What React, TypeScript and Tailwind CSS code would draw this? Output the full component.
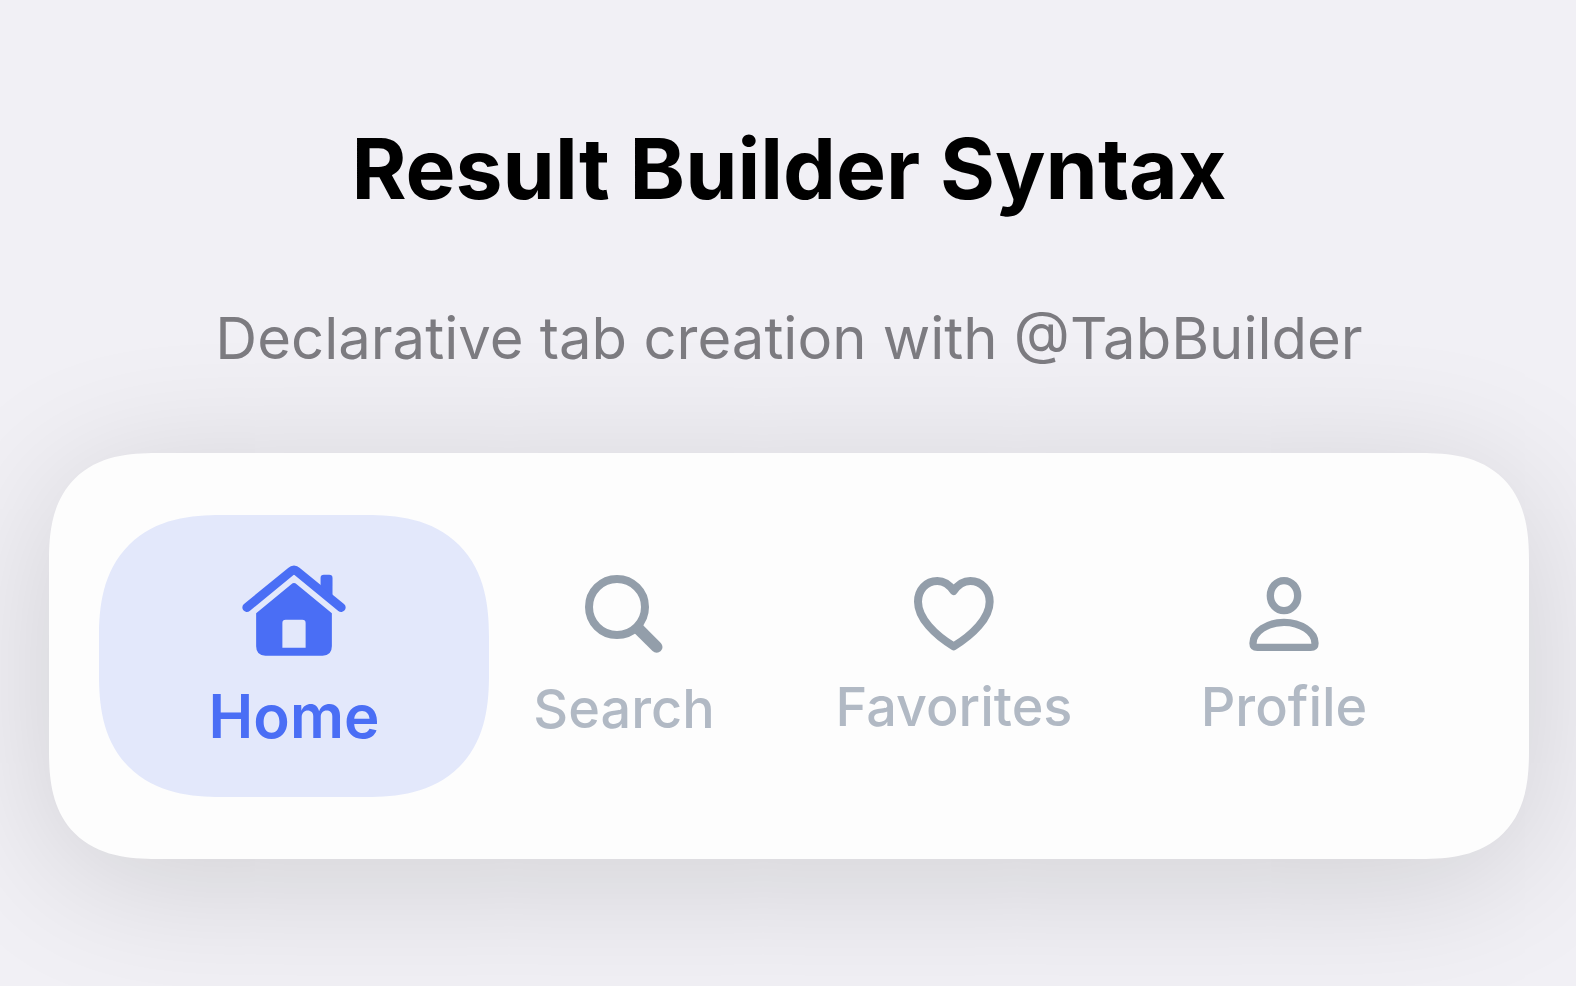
import { useState } from 'react';
import type { ReactElement } from 'react';

function HomeIcon() {
  return (
    <svg aria-hidden="true" viewBox="66 45 312 274" className="h-[91px] w-[104px]">
      <path d="M80 173 212 65Q222 56 232 65L364 173" fill="none" stroke="currentColor" strokeWidth="27" strokeLinecap="round" strokeLinejoin="round" />
      <path d="M302 108V84q0-10 10-10h16q10 0 10 10v56z" fill="currentColor" />
      <path
        fillRule="evenodd"
        fill="currentColor"
        d="M214 103q8-7 16 0l106 87v100q0 28-28 28H136q-28 0-28-28V190zM197 210q-10 0-10 10v74h70v-74q0-10-10-10z"
      />
    </svg>
  );
}

function SearchIcon() {
  return (
    <svg aria-hidden="true" viewBox="48 45 234 234" className="size-[78px]" fill="none" stroke="currentColor">
      <circle cx="144" cy="141" r="84" strokeWidth="24" />
      <path d="M210 208 263 261" strokeWidth="35" strokeLinecap="round" />
    </svg>
  );
}

function HeartIcon() {
  return (
    <svg aria-hidden="true" viewBox="42 51 240 222" className="h-[74px] w-[80px]" fill="none" stroke="currentColor">
      <path
        d="M161 93C148 74 131 63 112 63C78 63 54 90 54 125C54 175 105 225 161 259C217 225 269 175 269 125C269 90 245 63 211 63C191 63 174 74 161 93z"
        strokeWidth="24"
        strokeLinejoin="round"
      />
    </svg>
  );
}

function ProfileIcon() {
  return (
    <svg aria-hidden="true" viewBox="60 51 208 222" className="h-[74px] w-[70px]" fill="none" stroke="currentColor" strokeWidth="22">
      <ellipse cx="164" cy="107" rx="41" ry="45" />
      <path d="M84 262H244Q257 262 257 250C257 216 214 187 164 187C114 187 71 216 71 250Q71 262 84 262z" />
    </svg>
  );
}

const tabs: { name: string; Icon: () => ReactElement }[] = [
  { name: 'Home', Icon: HomeIcon },
  { name: 'Search', Icon: SearchIcon },
  { name: 'Favorites', Icon: HeartIcon },
  { name: 'Profile', Icon: ProfileIcon },
];

export default function App() {
  const [active, setActive] = useState('Home');

  return (
    <main className="min-h-screen overflow-hidden bg-[#f1f0f5] pt-[117px] pr-[47px] pb-32 pl-[49px] font-['Inter',sans-serif]">
      <header className="text-center">
        <h1 className="text-[84px] leading-[104px] font-bold text-black">Result Builder Syntax</h1>
        <p className="mt-[81px] text-[58px] leading-[72px] text-[#7c7b80]">Declarative tab creation with @TabBuilder</p>
      </header>
      <nav
        aria-label="Tabs"
        className="mt-[79px] grid h-[406px] grid-cols-4 items-center rounded-[108px] bg-[#fdfdfd] px-20 shadow-[0_20px_144px_rgba(0,0,0,0.14)] [corner-shape:superellipse(1.35)]"
      >
        {tabs.map(({ name, Icon }) => {
          const selected = name === active;
          return (
            <button
              key={name}
              type="button"
              aria-current={selected ? 'page' : undefined}
              onClick={() => setActive(name)}
              className={
                selected
                  ? '-mx-[30px] flex h-[282px] flex-col items-center justify-center gap-7 rounded-[122px] bg-[#e3e8fb] text-[#4a6ef5] [corner-shape:superellipse(1.3)]'
                  : 'flex h-[282px] flex-col items-center justify-center gap-7 text-[#939eaa]'
              }
            >
              <Icon />
              <span
                className={
                  selected
                    ? 'text-[60px] leading-[64px] font-semibold'
                    : 'text-[54px] leading-[56px] font-medium text-[#b1b9c4]'
                }
              >
                {name}
              </span>
            </button>
          );
        })}
      </nav>
    </main>
  );
}
